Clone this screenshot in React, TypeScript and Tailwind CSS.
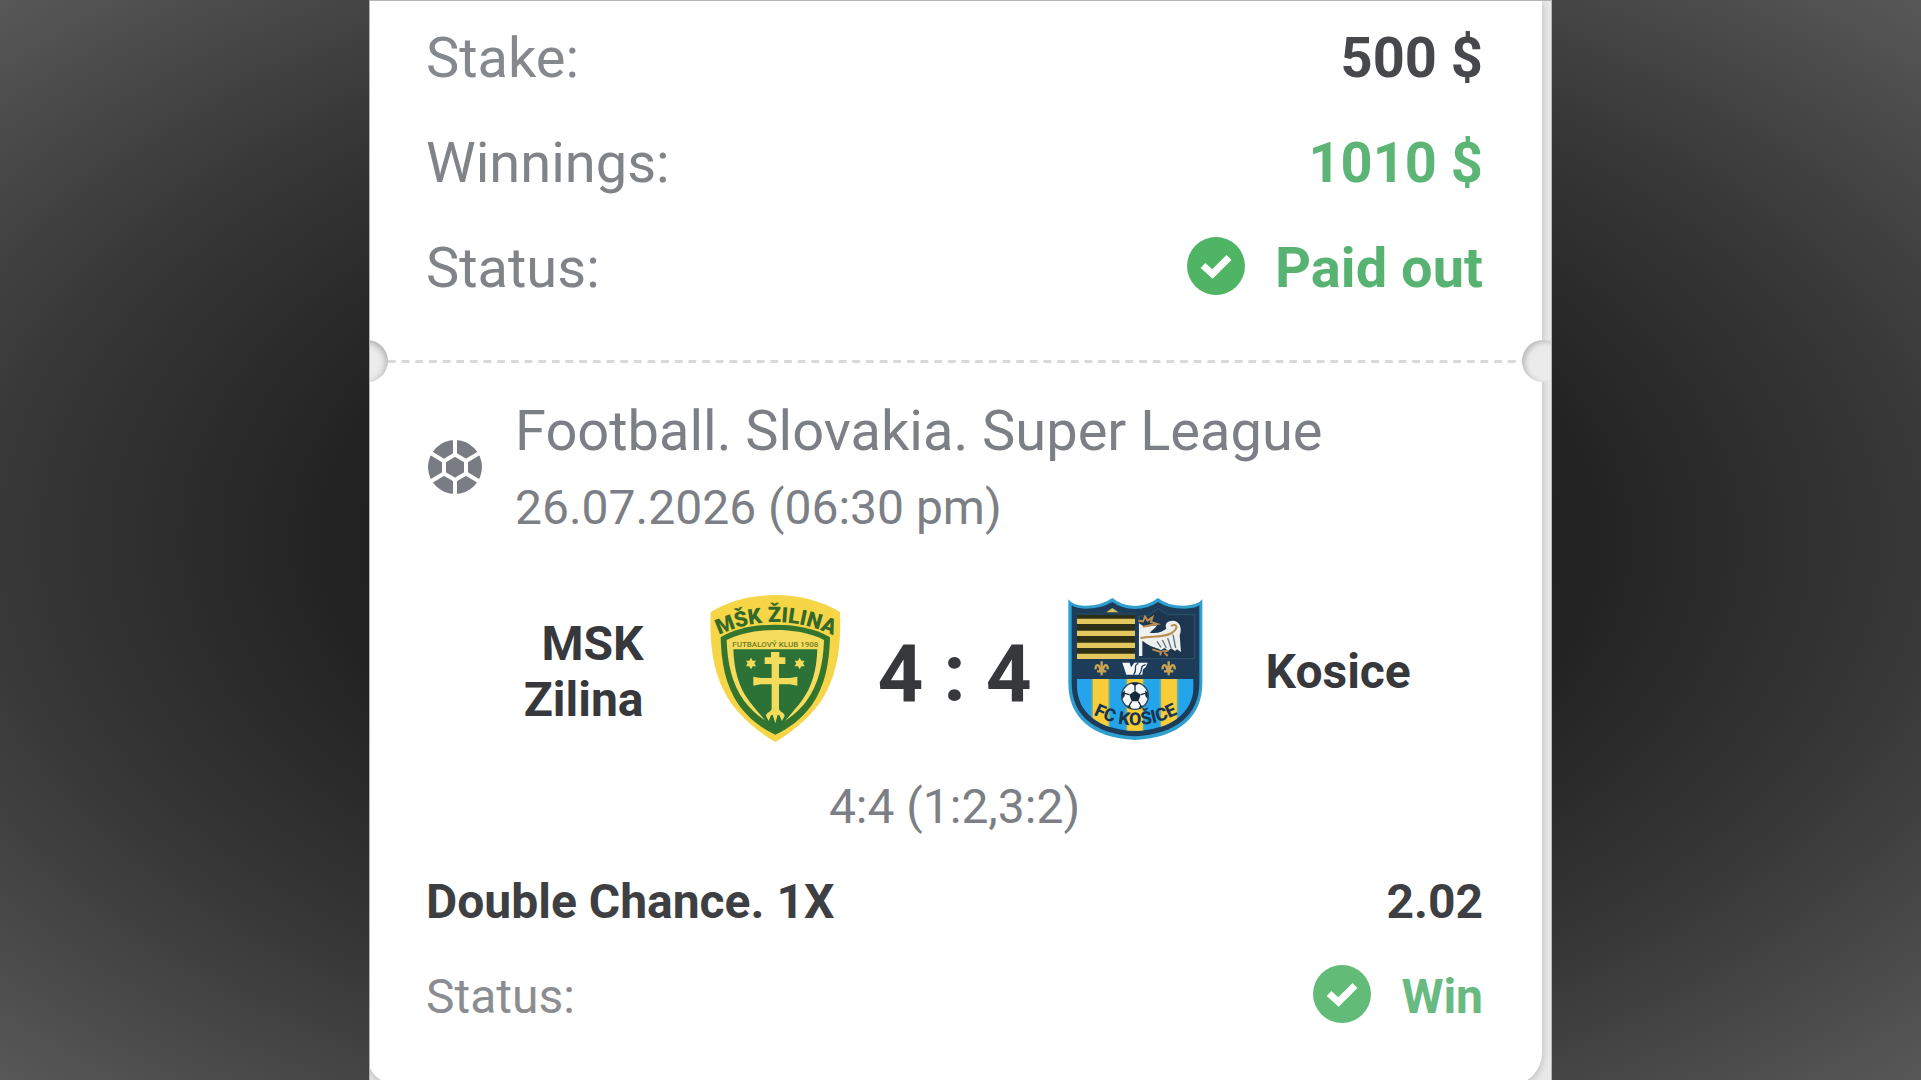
import React from 'react';

const CheckBadge = ({ className }: { className: string }) => (
  <svg viewBox="0 0 60 64" className={`h-16 w-[60px] ${className}`} aria-hidden="true">
    <circle cx="30" cy="29" r="29" fill="currentColor" />
    <path d="M17 28.500L26.500 37L43 20.500" fill="none" stroke="#fff" strokeWidth="7" />
  </svg>
);

const BallIcon = () => (
  <svg viewBox="1 0 60 60" className="size-[60px] shrink-0 text-[#797c82]" aria-hidden="true">
    <circle cx="30" cy="29" r="27" fill="currentColor" />
    <g stroke="#fff" strokeWidth="4">
      <path d="M30 16.500L41 23V35.500L30 42L19 35.500V23Z" fill="currentColor" />
      <path d="M30 0V16.500M30 42V58M41 23L56 14M41 35.500L56 44.500M19 23L4 14M19 35.500L4 44.500" />
    </g>
  </svg>
);

const ZilinaCrest = () => (
  <svg viewBox="45 42 420 468" className="h-[156px] w-[140px]" role="img" aria-label="MSK Zilina">
    <path
      d="M256 45C190 46 122 60 62 96C58 200 70 290 120 365C160 420 210 458 256 486C302 458 352 420 392 365C442 290 454 200 450 96C390 60 322 46 256 45Z"
      fill="#f6d546"
    />
    <path
      d="M92 172C140 143 200 134 256 134C312 134 372 143 420 172C418 250 405 318 366 374C334 418 296 445 256 464C216 445 178 418 146 374C107 318 94 250 92 172Z"
      fill="#33742f"
    />
    <path
      d="M110 180C155 157 205 150 256 150C307 150 357 157 402 180C400 250 386 312 350 362C326 394 296 418 256 440C216 418 186 394 162 362C126 312 112 250 110 180Z"
      fill="#f6dc5c"
    />
    <path
      d="M130 208H382C380 270 366 322 334 364C310 396 286 420 256 458C226 420 202 396 178 364C146 322 132 270 130 208Z"
      fill="#2c7236"
    />
    <g fill="#f3dc5a">
      <path d="M243 232V216H268V232H286V252H267V294H300L322 290V317L300 313H267V388C272 398 284 398 284 408L276 423L268 406L263 404L256 430L248 404L243 406L236 423L228 408C228 398 240 398 245 388V313H212L190 317V290L212 294H245V252H224V232Z" />
      <path d="M183 233L188 242H198L193 250L198 259H188L183 268L178 259H168L173 250L168 242H178Z" />
      <path d="M329 233L334 242H344L339 250L344 259H334L329 268L324 259H314L319 250L314 242H324Z" />
    </g>
    <path id="zilina-arc" d="M88 164Q256 88 428 165" fill="none" />
    <text
      fill="#33692a"
      fontSize="64"
      fontWeight="900"
      textAnchor="middle"
      style={{ fontFamily: 'Roboto, sans-serif' }}
    >
      <textPath href="#zilina-arc" startOffset="50%">MŠK ŽILINA</textPath>
    </text>
    <text
      x="256"
      y="200"
      fill="#6f7d28"
      fontSize="24"
      fontWeight="500"
      textAnchor="middle"
      style={{ fontFamily: 'Roboto, sans-serif' }}
    >
      FUTBALOVÝ KLUB 1908
    </text>
  </svg>
);

const KosiceCrest = () => (
  <svg viewBox="42 42 420 468" className="h-[156px] w-[140px]" role="img" aria-label="FC Kosice">
    <path
      d="M52 58Q66 77 100 77Q150 78 184 54Q212 77 252 78Q292 77 321 54Q350 78 400 77Q440 76 454 58V310C454 410 384 474 252 480C120 474 52 410 52 310Z"
      fill="#2f9fd0"
    />
    <path
      d="M62 76Q76 86 104 86Q150 86 184 66Q212 86 252 87Q292 86 321 66Q350 86 400 86Q432 86 445 76V310C445 404 376 463 252 469C128 463 62 404 62 310Z"
      fill="#1c3c59"
    />
    <path d="M78 98H152L184 84L216 98H252V236H78Z" fill="#24435a" />
    <path d="M166 97L184 84L202 97Z" fill="#d8c25c" />
    <path d="M78 105H252V236H78Z" fill="#2d3016" />
    <path d="M78 124H252M78 160H252M78 196H252M78 229H252" stroke="#e5c75f" strokeWidth="16" />
    <path
      d="M264 108H290L321 86L350 104H430V236H264Z"
      fill="#1d3650"
      stroke="#2f566f"
      strokeWidth="3"
    />
    {/* eagle */}
    <path
      d="M264 130L280 140L318 136C314 144 304 150 296 158C320 162 336 154 346 146C340 130 350 122 366 122C390 124 393 150 386 166L390 216L378 208L372 213L360 205L352 212L340 204L330 211C318 202 302 202 288 192L274 182V228H264Z"
      fill="#eef0ee"
    />
    <path
      d="M318 184L330 202M334 180L346 204M350 174L360 204M366 164L374 204"
      stroke="#5f7182"
      strokeWidth="4"
    />
    <path
      d="M262 122L276 124L282 110L290 122L304 112L300 126L318 132L276 140M268 174C310 168 350 172 366 156C382 144 378 128 360 138M304 208L330 216L328 226M334 214L352 212M340 218L350 228"
      fill="none"
      stroke="#b98c4f"
      strokeWidth="6"
    />
    {/* lilies */}
    <g fill="none" stroke="#c9a552" strokeWidth="7">
      <path d="M152 244V286M134 268C132 252 146 250 148 272M170 268C172 252 158 250 156 272M138 274H166" />
      <path d="M353 244V286M335 268C333 252 347 250 349 272M371 268C373 252 359 250 357 272M339 274H367" />
    </g>
    <path
      d="M214 248H236L240 262L250 248H290L284 262L276 268L274 284H226Z"
      fill="#f4f6f8"
    />
    <path
      d="M262 250C244 258 262 266 248 284M284 254C262 260 280 268 264 284"
      fill="none"
      stroke="#1c3c59"
      strokeWidth="4"
    />
    <clipPath id="kosice-base">
      <path d="M78 297H428V320C426 396 364 448 252 453C140 448 80 396 78 320Z" />
    </clipPath>
    <g clipPath="url(#kosice-base)">
      <path d="M78 297H428V460H78Z" fill="#24a4ea" />
      <path d="M149 297V460M252 297V460M354 297V460" stroke="#6fae98" strokeWidth="56" />
      <path d="M149 297V460M252 297V460M354 297V460" stroke="#f8cd38" strokeWidth="47" />
    </g>
    <circle cx="252" cy="348" r="40" fill="#f5f7f8" stroke="#2b4456" strokeWidth="4" />
    <path
      d="M252 332L269 344L262 364H242L235 344ZM238 309H266L252 318ZM213 340L222 331L221 348L214 358ZM291 340L282 331L283 348L290 358ZM226 376L238 378L240 387ZM278 376L266 378L264 387Z"
      fill="#15293c"
    />
    <path
      d="M252 332V316M269 344L283 340M262 364L270 378M242 364L234 378M235 344L221 340"
      stroke="#15293c"
      strokeWidth="4"
    />
    <path id="kosice-arc" d="M112 396Q252 476 396 394" fill="none" />
    <text
      fill="#173450"
      fontSize="54"
      fontWeight="800"
      textAnchor="middle"
      style={{ fontFamily: 'Roboto, sans-serif' }}
    >
      <textPath href="#kosice-arc" startOffset="50%">FC KOŠICE</textPath>
    </text>
  </svg>
);

const summary = [
  { label: 'Stake:', value: '500 $', labelColor: 'text-[#85888c]', color: 'text-[#47484b]' },
  { label: 'Winnings:', value: '1010 $', labelColor: 'text-[#808388]', color: 'text-[#5cb475]' },
  { label: 'Status:', value: 'Paid out', labelColor: 'text-[#808388]', color: 'text-[#58b271]', paid: true },
];

const App = () => {
  return (
    <div className="flex h-screen justify-center overflow-hidden bg-[radial-gradient(ellipse_farthest-corner,#1c1c1c_0%,#202020_43%,#383838_71%,#454545_83%,#585858_100%)] font-['Roboto',sans-serif]">
      <main className="w-full max-w-[1183px] overflow-hidden border-x border-t border-[#b4b4b4] bg-[#e9e9e9]">
        <article className="-ml-1 mr-[9px] rounded-b-[32px] bg-white pt-[25px] pb-14 shadow-[0_2px_8px_rgba(0,0,0,0.22)]">
          {/* Payout summary */}
          <dl className="flex flex-col gap-10 pr-[59px] pl-[60px] text-[56px] leading-[65px]">
            {summary.map((row) => (
              <div key={row.label} className="flex items-center justify-between">
                <dt className={row.labelColor}>{row.label}</dt>
                <dd className={`flex items-center gap-[29px] font-bold ${row.color}`}>
                  {row.paid && <CheckBadge className="text-[#4fb564]" />}
                  {row.value}
                </dd>
              </div>
            ))}
          </dl>

          {/* Ticket perforation */}
          <div className="mt-[39px] flex items-center" aria-hidden="true">
            <div className="-ml-5 size-[42px] shrink-0 rounded-full bg-[#ebebeb] shadow-[inset_-2px_2px_6px_rgba(0,0,0,0.25)]" />
            <div className="h-[3px] grow bg-[linear-gradient(to_right,#d9d9d9_8px,transparent_8px)] bg-[length:calc(100%/83)_3px]" />
            <div className="relative -mr-[22px] size-[42px] shrink-0 rounded-full bg-[#ebebeb] shadow-[inset_3px_2px_5px_rgba(0,0,0,0.2)]" />
          </div>

          <section className="mt-[17px] pr-[59px] pl-[60px] text-5xl leading-14">
            <div className="flex items-center gap-[29px]">
              <BallIcon />
              <div className="text-[#7c7f85]">
                <h2 className="text-[56px] leading-[65px]">Football. Slovakia. Super League</h2>
                <p className="mt-4">26.07.2026 (06:30 pm)</p>
              </div>
            </div>

            <div className="mt-[58px] grid grid-cols-[1fr_140px_220px_140px_1fr] items-center font-bold text-[#37383b]">
              <div className="flex justify-end pr-[61px] text-right">
                <span className="w-min">MSK Zilina</span>
              </div>
              <ZilinaCrest />
              <div className="pt-1 text-center text-[80px] leading-none">4 : 4</div>
              <KosiceCrest />
              <div className="pl-[61px]">Kosice</div>
            </div>

            <p className="mt-[29px] text-center text-[#7c7f85]">4:4 (1:2,3:2)</p>

            <div className="mt-[39px] flex justify-between font-bold text-[#3e3f42]">
              <h3>Double Chance. 1X</h3>
              <span>2.02</span>
            </div>

            <div className="mt-[35px] flex items-center justify-between">
              <span className="text-[#8b8d91]">Status:</span>
              <span className="flex items-center gap-[29px] font-bold text-[#68ba80]">
                <CheckBadge className="text-[#62bb76]" />
                Win
              </span>
            </div>
          </section>
        </article>
      </main>
    </div>
  );
};

export default App;
